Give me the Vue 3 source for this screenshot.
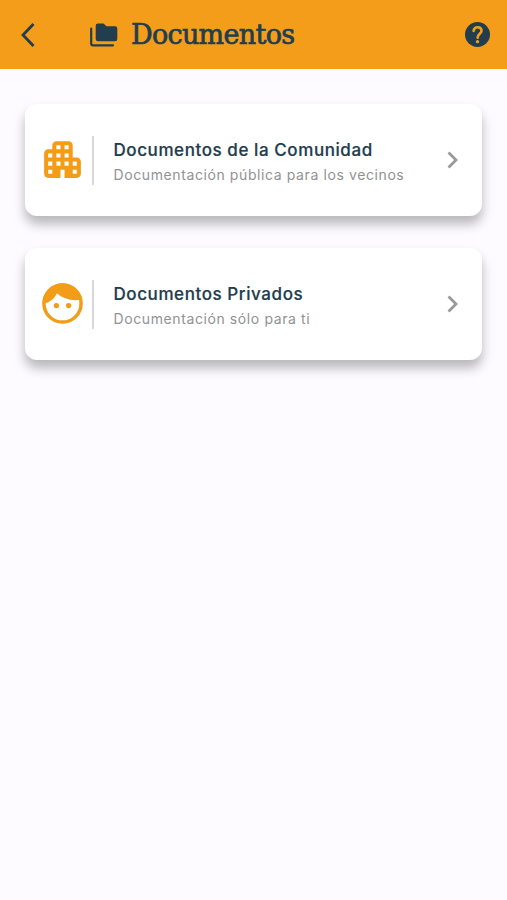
<script setup>
const cards = [
  { icon: 'building', title: 'Documentos de la Comunidad', text: 'Documentación pública para los vecinos' },
  { icon: 'face', title: 'Documentos Privados', text: 'Documentación sólo para ti' },
]
</script>

<template>
  <div class="screen">
    <header class="bar">
      <svg class="back" viewBox="0 0 16 26"><path d="M13.500 2 3 13l10.500 11" /></svg>
      <svg class="folders" viewBox="0 0 28 24">
        <path d="M1.200 5.500V20.500Q1.200 22.300 3 22.300H23" fill="none" stroke="currentColor" stroke-width="2.200" stroke-linecap="round" />
        <path d="M8 .5h5.500l3 2.700H25q2.300 0 2.300 2.300V16q0 2.300-2.300 2.300H8q-2.300 0-2.300-2.300V2.800Q5.700.5 8 .5z" fill="currentColor" />
      </svg>
      <h1>Documentos</h1>
      <svg class="help" viewBox="2 2 20 20">
        <circle cx="12" cy="12" r="10" fill="currentColor" />
        <path d="M8.900 9.100C9.100 7.300 10.400 6.200 12.100 6.200c1.800 0 3.100 1.100 3.100 2.700 0 2.400-3.100 2.600-3.100 5.600" fill="none" stroke="#f49d1a" stroke-width="2.100" stroke-linecap="round" />
        <circle cx="12" cy="17.700" r="1.350" fill="#f49d1a" />
      </svg>
    </header>
    <main class="list">
      <article v-for="card in cards" :key="card.title" class="card">
        <div class="icon">
          <svg v-if="card.icon === 'building'" viewBox="0 0 24 24"><path fill="currentColor" d="M17 11V5c0-1.100-.9-2-2-2H9c-1.100 0-2 .9-2 2v2H5c-1.100 0-2 .9-2 2v10c0 1.100.9 2 2 2h6v-4h2v4h6c1.100 0 2-.9 2-2v-6c0-1.100-.9-2-2-2h-2zM7 19H5v-2h2v2zm0-4H5v-2h2v2zm0-4H5V9h2v2zm4 4H9v-2h2v2zm0-4H9V9h2v2zm0-4H9V5h2v2zm4 8h-2v-2h2v2zm0-4h-2V9h2v2zm0-4h-2V5h2v2zm4 12h-2v-2h2v2zm0-4h-2v-2h2v2z" /></svg>
          <svg v-else viewBox="0 0 24 24">
            <circle cx="12" cy="12" r="9.100" fill="none" stroke="currentColor" stroke-width="1.700" />
            <path fill="currentColor" d="M2.500 12.300C2 6 7 2.200 12 2.200s9 3.300 9.500 7.900c-5 .9-9.200-.4-12.200-3.100C8.200 9.400 5.800 11.500 2.500 12.300z" />
            <circle cx="9" cy="13" r="1.300" fill="currentColor" />
            <circle cx="15" cy="13" r="1.300" fill="currentColor" />
          </svg>
        </div>
        <div class="copy">
          <h2>{{ card.title }}</h2>
          <p>{{ card.text }}</p>
        </div>
        <svg class="chevron" viewBox="0 0 12 18"><path d="m1.500 1.500 7.500 7.500-7.500 7.500" /></svg>
      </article>
    </main>
  </div>
</template>

<style>
body { background: #fdfbff; }
</style>

<style scoped>
.screen { min-height: 900px; background: #fdfbff; font-family: Inter, sans-serif; color: #213d4e; }
.bar { box-sizing: border-box; height: 69px; padding: 0 17px 0 20px; display: flex; align-items: center; background: #f49d1a; }
.back { width: 16px; height: 26px; margin-right: 54px; fill: none; stroke: currentColor; stroke-width: 2.800; }
.folders { width: 28px; height: 24px; }
h1 { margin: 0 auto 0 13px; padding-top: 1px; font: 400 27px/36px "DejaVu Serif", serif; letter-spacing: -0.7px; -webkit-text-stroke: 0.7px currentColor; }
.help { width: 25px; height: 25px; }
.list { display: flex; flex-direction: column; gap: 32px; padding: 35px 25px; }
.card { box-sizing: border-box; height: 112px; padding: 0 23px 0 12px; display: flex; align-items: center; border-radius: 12px; background: #fff; box-shadow: 0 8px 12px rgba(0, 0, 0, 0.28); }
.icon { display: flex; align-items: center; width: 55px; height: 49px; border-right: 2px solid #d8d8d8; color: #f39c18; }
.icon svg { display: block; width: 49px; height: 49px; margin: -1px 0 0 0.5px; }
.copy { flex: 1; margin-left: 19.5px; padding-top: 4px; white-space: nowrap; }
h2 { margin: 0; padding-top: 1px; font-size: 17px; line-height: 24px; font-weight: 500; letter-spacing: 0.58px; -webkit-text-stroke: 0.2px currentColor; }
p { margin: 0; font-size: 14px; line-height: 25px; letter-spacing: 0.6px; color: #929292; }
.chevron { width: 12px; height: 18px; fill: none; stroke: #999; stroke-width: 2.800; }
</style>
